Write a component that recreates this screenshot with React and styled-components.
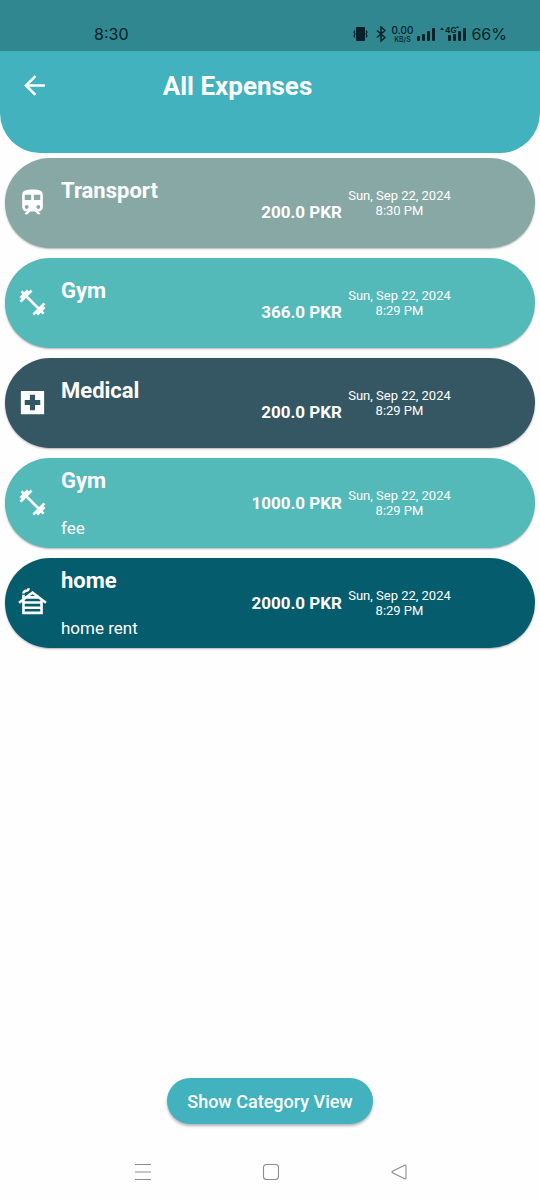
import React from "react";
import styled, { createGlobalStyle } from "styled-components";
import {
  MdArrowBack,
  MdFitnessCenter,
  MdOutlineCabin,
  MdTrain,
} from "react-icons/md";

const GlobalStyle = createGlobalStyle`
  * { box-sizing: border-box; }
  body {
    margin: 0;
    background: #fefefe;
    font-family: Roboto, "Liberation Sans", sans-serif;
  }
`;

const Screen = styled.div`
  min-height: 100vh;
  display: flex;
  flex-direction: column;
`;

const StatusBar = styled.div`
  height: 51px;
  padding: 17px 33px 0 94px;
  display: flex;
  align-items: flex-start;
  justify-content: space-between;
  background: #31878f;
  color: #05222a;
  font-family: Inter, "Liberation Sans", sans-serif;
  font-size: 16px;
  line-height: 34px;
`;

const Clock = styled.time`
  line-height: 34px;
`;

const StatusIcons = styled.div`
  height: 34px;
  display: flex;
  align-items: center;

  svg {
    display: block;
    fill: currentColor;
  }
`;

const NetSpeed = styled.span`
  width: 22px;
  margin: 0 4px 0 5px;
  display: flex;
  flex-direction: column;
  align-items: center;
  font-size: 10px;
  font-weight: 500;
  line-height: 12px;
`;

const NetUnit = styled.span`
  font-size: 7px;
  line-height: 8px;
`;

const Battery = styled.span`
  margin-left: 5px;
`;

const Header = styled.header`
  height: 102px;
  padding: 10px 77px 0 12px;
  display: flex;
  align-items: flex-start;
  background: #43b2bf;
  border-radius: 0 0 40px 40px;
  color: #fff;
`;

const BackButton = styled.button`
  width: 44px;
  height: 48px;
  margin-right: -44px;
  padding: 0;
  display: grid;
  place-items: center;
  border: 0;
  background: none;
  color: inherit;
  font-size: 31px;
`;

const Title = styled.h1`
  flex: 1;
  margin: 0;
  text-align: center;
  font-size: 26px;
  font-weight: 700;
  line-height: 50px;
`;

const List = styled.ul`
  flex: 1;
  margin: 0;
  padding: 5px;
  display: flex;
  flex-direction: column;
  gap: 10px;
  list-style: none;
`;

const Card = styled.li`
  height: 90px;
  padding: 0 84px 0 12px;
  display: flex;
  align-items: center;
  border-radius: 45px;
  background: ${(p) => p.$color};
  box-shadow: 0 1px 2px rgba(0, 0, 0, 0.3);
  color: #fff;
`;

const CardIcon = styled.span`
  width: 32px;
  height: 32px;
  margin-right: 12px;
  font-size: 31px;

  svg {
    display: block;
  }
`;

const Details = styled.div`
  flex: 1;
  min-width: 0;
  display: flex;
  flex-direction: column;
  gap: ${(p) => (p.$hasNote ? "22px" : "2px")};
`;

const Category = styled.h2`
  margin: 0;
  font-size: 22px;
  font-weight: 700;
  line-height: 28px;
`;

const Note = styled.p`
  min-height: 22px;
  margin: 0;
  font-size: 17px;
  line-height: 22px;
`;

const Amount = styled.span`
  padding-top: ${(p) => (p.$lowered ? "18px" : "0")};
  margin-right: 6px;
  font-size: 17px;
  font-weight: 700;
  line-height: 20px;
`;

const When = styled.time`
  width: 103px;
  text-align: center;
  white-space: nowrap;
  font-size: 13px;
  line-height: 15px;

  span {
    display: block;
  }
`;

const Footer = styled.footer`
  padding-bottom: 30px;
  display: flex;
  justify-content: center;
`;

const CategoryButton = styled.button`
  height: 46px;
  padding: 0 20px;
  border: 0;
  border-radius: 23px;
  background: #43b2bf;
  box-shadow: 0 2px 3px rgba(0, 0, 0, 0.3);
  color: #fff;
  font-family: inherit;
  font-size: 18px;
  font-weight: 500;
`;

const SystemNav = styled.nav`
  height: 46px;
  padding: 0 0 10px 2px;
  display: grid;
  grid-template-columns: repeat(3, 128px);
  justify-content: center;
`;

const NavButton = styled.button`
  padding: 0;
  display: grid;
  place-items: center;
  border: 0;
  background: none;
  color: #8c8c8c;

  svg {
    fill: none;
    stroke: currentColor;
    stroke-width: 1.1;
  }
`;

const HospitalIcon = () => (
  <svg width="1em" height="1em" viewBox="0 0 24 24" fill="currentColor">
    <path d="M21 3H3v18h18V3zm-3 11h-4v4h-4v-4H6v-4h4V6h4v4h4v4z" />
  </svg>
);

const VibrateIcon = () => (
  <svg width="15" height="16" viewBox="0 0 15 16">
    <rect x="3" y="1" width="9" height="14" rx="1" />
    <path
      d="M2 4.500 1 6l1 2-1 2 1 1.500M13 4.500 14 6l-1 2 1 2-1 1.500"
      fill="none"
      stroke="currentColor"
      strokeWidth="1.2"
    />
  </svg>
);

const BluetoothIcon = () => (
  <svg width="18" height="16" viewBox="0 0 18 16">
    <path
      d="M9 4.500l8 7L13 15V1l4 3.500-8 7"
      fill="none"
      stroke="currentColor"
      strokeWidth="1.5"
    />
  </svg>
);

const SignalIcon = () => (
  <svg width="18" height="16" viewBox="0 0 18 16">
    <rect x="0" y="10" width="3" height="5" rx="1" />
    <rect x="5" y="8" width="3" height="7" rx="1" />
    <rect x="10" y="5" width="3" height="10" rx="1" />
    <rect x="15" y="2" width="3" height="13" rx="1" />
  </svg>
);

const Signal4gIcon = () => (
  <svg width="31" height="18" viewBox="0 0 31 18">
    <path d="M5 5l2-2.500L9 5zM21 3l1.500-2L24 3z" />
    <text x="10" y="8" fontSize="8" fontWeight="700">
      4G
    </text>
    <rect x="13" y="10" width="3" height="6" rx="1" />
    <rect x="18" y="9" width="3" height="7" rx="1" />
    <rect x="23" y="6" width="3" height="10" rx="1" />
    <rect x="28" y="3" width="3" height="13" rx="1" />
  </svg>
);

const expenses = [
  { category: "Transport", amount: "200.0 PKR", time: "8:30 PM", color: "#88a8a5", Icon: MdTrain },
  { category: "Gym", amount: "366.0 PKR", time: "8:29 PM", color: "#54b9b9", Icon: MdFitnessCenter },
  { category: "Medical", amount: "200.0 PKR", time: "8:29 PM", color: "#355763", Icon: HospitalIcon },
  { category: "Gym", note: "fee", amount: "1000.0 PKR", time: "8:29 PM", color: "#54b9b9", Icon: MdFitnessCenter },
  { category: "home", note: "home rent", amount: "2000.0 PKR", time: "8:29 PM", color: "#045c6d", Icon: MdOutlineCabin },
];

export default function App() {
  return (
    <Screen>
      <GlobalStyle />
      <StatusBar>
        <Clock>8:30</Clock>
        <StatusIcons>
          <VibrateIcon />
          <BluetoothIcon />
          <NetSpeed>
            0.00
            <NetUnit>KB/S</NetUnit>
          </NetSpeed>
          <SignalIcon />
          <Signal4gIcon />
          <Battery>66%</Battery>
        </StatusIcons>
      </StatusBar>
      <Header>
        <BackButton aria-label="Back">
          <MdArrowBack />
        </BackButton>
        <Title>All Expenses</Title>
      </Header>
      <List>
        {expenses.map(({ category, note, amount, time, color, Icon }, i) => (
          <Card key={i} $color={color}>
            <CardIcon>
              <Icon />
            </CardIcon>
            <Details $hasNote={Boolean(note)}>
              <Category>{category}</Category>
              <Note>{note}</Note>
            </Details>
            <Amount $lowered={!note}>{amount}</Amount>
            <When>
              <span>Sun, Sep 22, 2024</span>
              <span>{time}</span>
            </When>
          </Card>
        ))}
      </List>
      <Footer>
        <CategoryButton>Show Category View</CategoryButton>
      </Footer>
      <SystemNav aria-label="System">
        <NavButton aria-label="Recent apps">
          <svg width="18" height="18" viewBox="0 0 18 18">
            <path d="M1 1.500h16M1 9h16M1 16.500h16" />
          </svg>
        </NavButton>
        <NavButton aria-label="Home">
          <svg width="18" height="18" viewBox="0 0 18 18">
            <rect x="1.5" y="1.5" width="15" height="15" rx="3" />
          </svg>
        </NavButton>
        <NavButton aria-label="Back">
          <svg width="18" height="18" viewBox="0 0 18 18">
            <path d="M14.500 2.300Q16 1.700 16 3.200V14.800Q16 16.300 14.500 15.700L2.500 9.700Q1.500 9 2.500 8.300Z" />
          </svg>
        </NavButton>
      </SystemNav>
    </Screen>
  );
}
